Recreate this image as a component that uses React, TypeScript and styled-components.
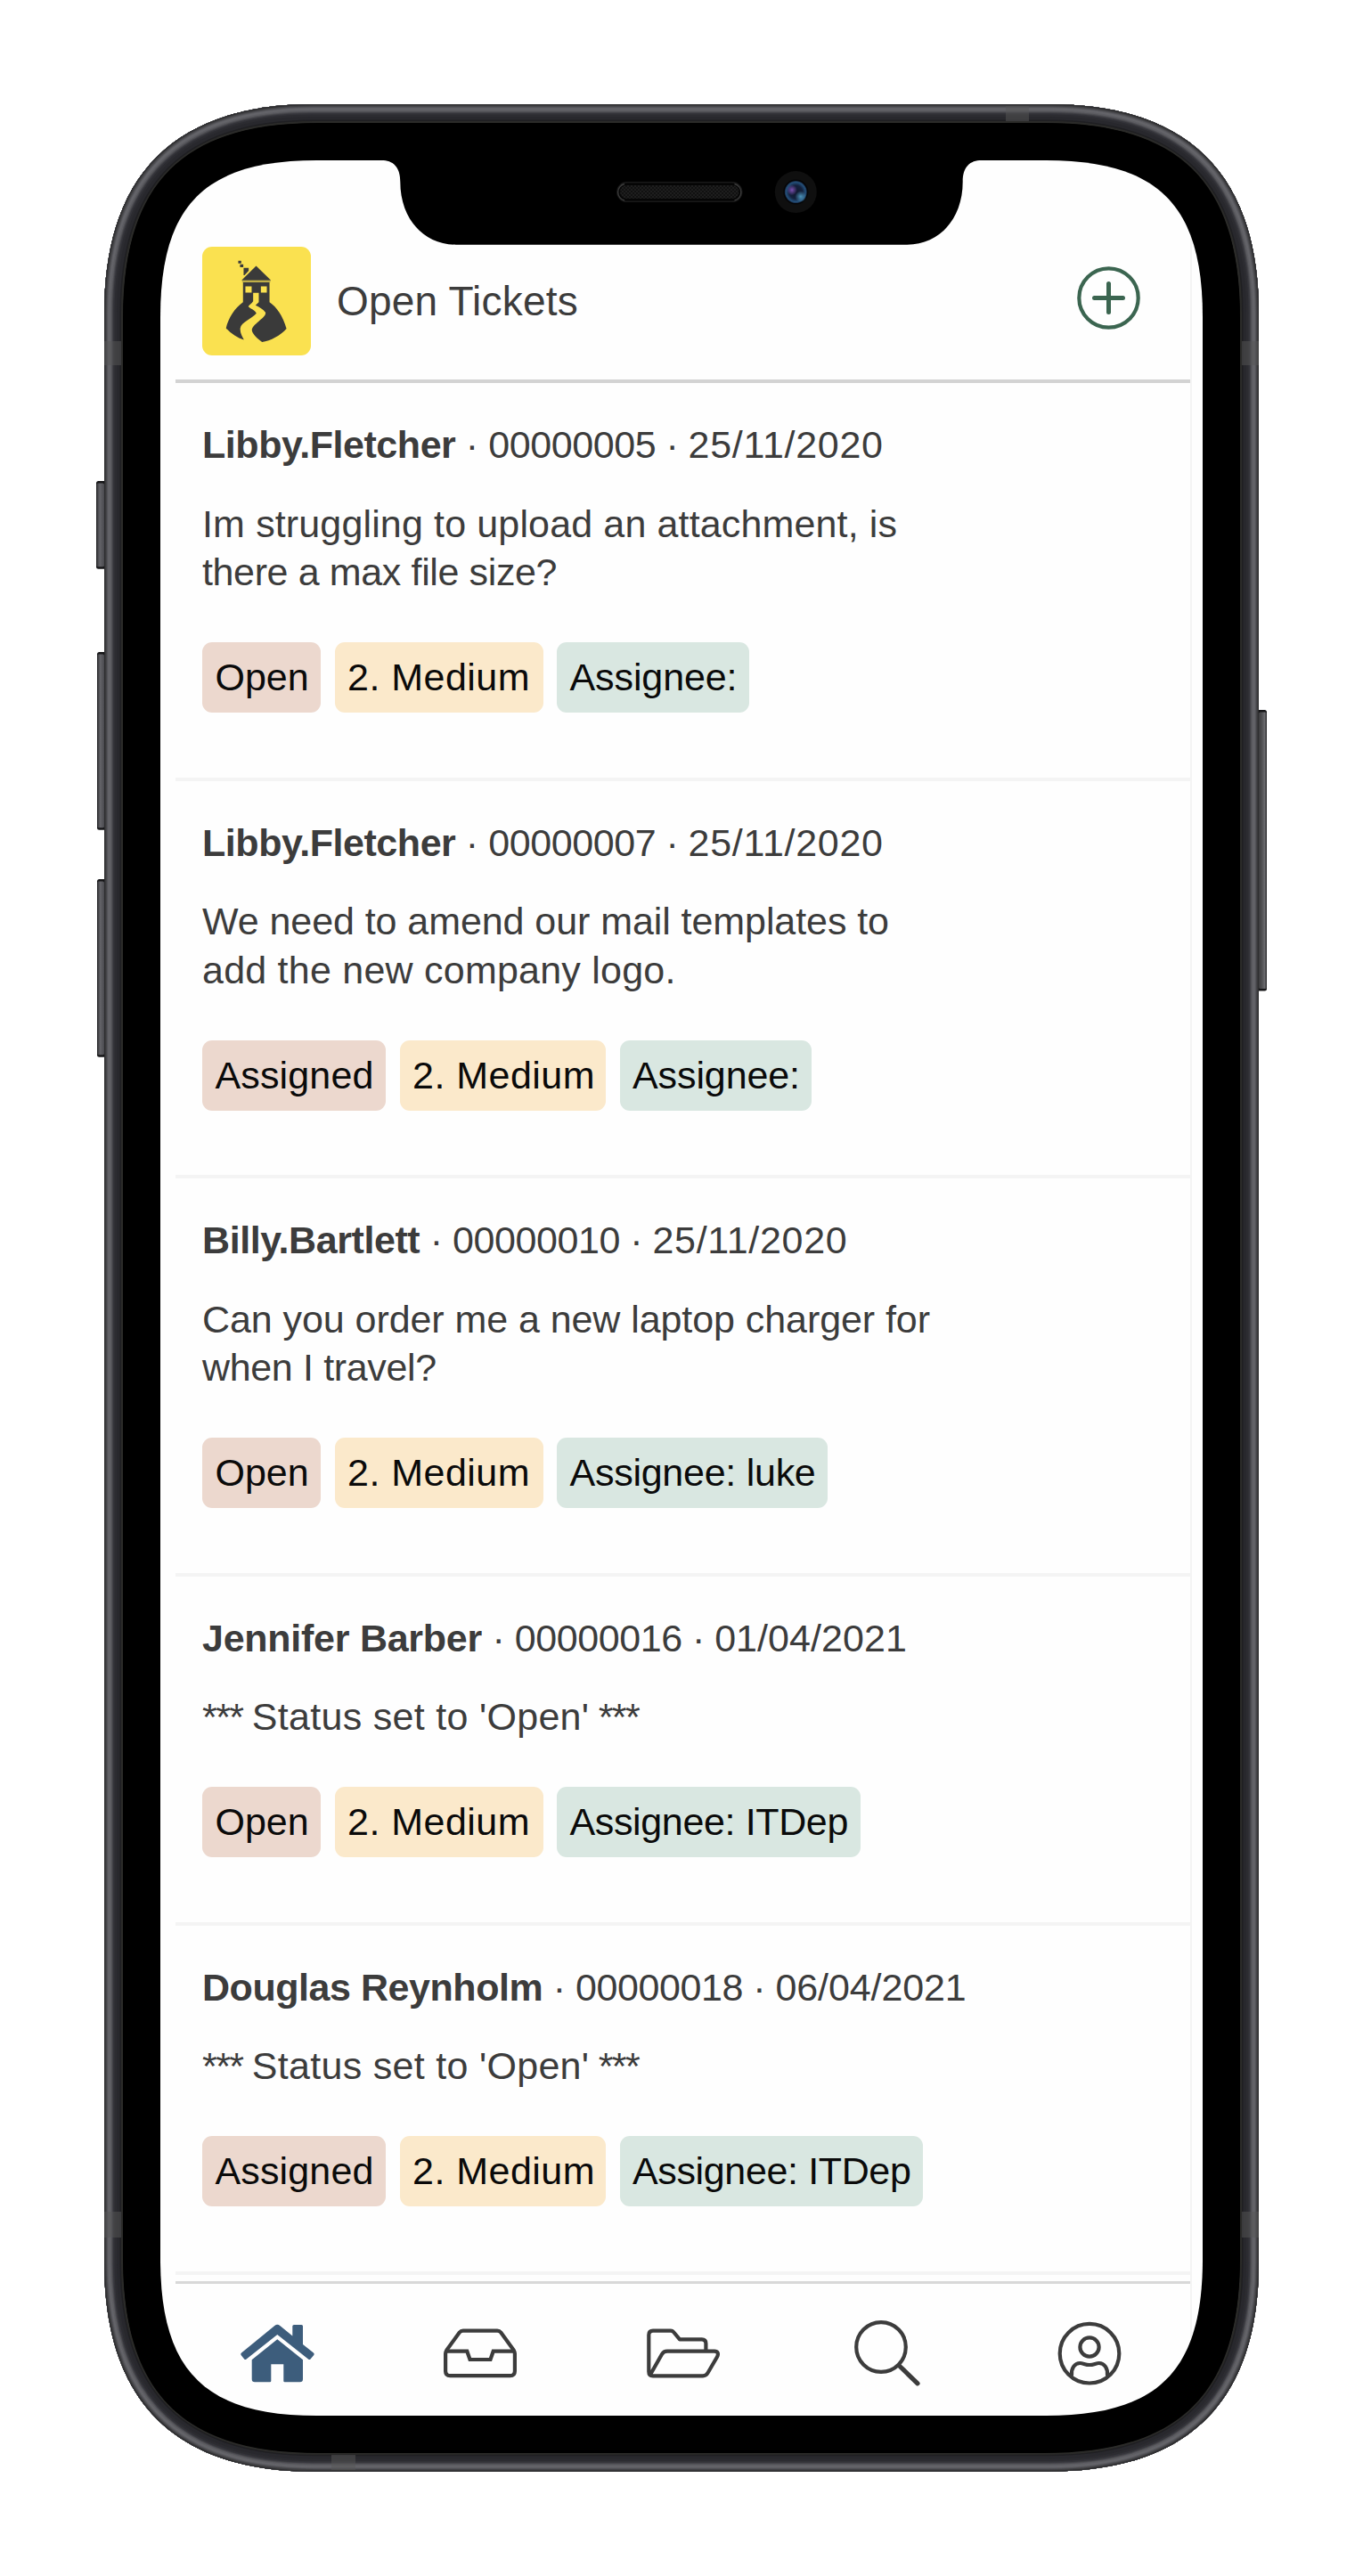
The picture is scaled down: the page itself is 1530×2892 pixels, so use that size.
import React from "react";
import styled, { createGlobalStyle } from "styled-components";

const GlobalStyle = createGlobalStyle`
  *, *::before, *::after { box-sizing: border-box; }
  body {
    margin: 0;
    background: #ffffff;
    font-family: "Liberation Sans", Arial, Helvetica, sans-serif;
  }
`;

/* ---------- device ---------- */

const Stage = styled.main`
  position: relative;
  width: 1530px;
  height: 2892px;
  padding: 180px;
  overflow: hidden;
  background: #ffffff;
`;

const DeviceArt = styled.svg`
  position: absolute;
  inset: 0;
  display: block;
  pointer-events: none;
`;

type Corner = { l: number; t: number; r: number; b: number; reach: number; pull: number };

const roundedPath = ({ l, t, r, b, reach: n, pull: k }: Corner) =>
  `M${l + n} ${t}H${r - n}C${r - k} ${t} ${r} ${t + k} ${r} ${t + n}V${b - n}` +
  `C${r} ${b - k} ${r - k} ${b} ${r - n} ${b}H${l + n}` +
  `C${l + k} ${b} ${l} ${b - k} ${l} ${b - n}V${t + n}C${l} ${t + k} ${l + k} ${t} ${l + n} ${t}Z`;

const BODY = roundedPath({ l: 117, t: 117, r: 1413, b: 2774.7, reach: 235, pull: 79 });
const GLASS = roundedPath({ l: 138, t: 138, r: 1392, b: 2754, reach: 220, pull: 67 });
const DISPLAY = roundedPath({ l: 180, t: 180, r: 1350, b: 2712, reach: 176, pull: 50 });

const NOTCH =
  "M426 178V180H428.3C441 180 449.3 187 449.3 204C449.3 246 476 274.7 511.7 274.7" +
  "H1018.3C1054 274.7 1080.7 246 1080.7 204C1080.7 187 1089 180 1101.7 180H1104V178Z";

/* depth from the outer edge of the metal band, and its shade there */
const METAL: [number, string][] = [
  [21.5, "#2b2b29"],
  [19, "#1f1f22"],
  [17.5, "#28282d"],
  [14, "#2c2c31"],
  [11.5, "#34343a"],
  [10, "#414146"],
  [9, "#4f4f54"],
  [8, "#5d5d62"],
  [6.5, "#646469"],
  [4.5, "#5b5b60"],
  [3.5, "#4d4d51"],
  [2.5, "#3f3f42"],
  [1.2, "#2d2d2f"],
];

const BANDS = [
  [117, 383, 19, 27],
  [1394, 383, 19, 27],
  [117, 2483, 19, 29],
  [1394, 2483, 19, 29],
  [1129, 119, 26, 17],
  [372, 2756, 27, 17],
];

const BUTTONS = [
  { x: 108, y: 540, w: 9, h: 98.7, left: true },
  { x: 109, y: 732, w: 8, h: 199.7, left: true },
  { x: 109, y: 987, w: 8, h: 199.8, left: true },
  { x: 1413, y: 797, w: 9, h: 315.5, left: false },
];

const Device = () => (
  <DeviceArt width="1530" height="2892" viewBox="0 0 1530 2892" aria-hidden="true">
    <defs>
      <clipPath id="body">
        <path d={BODY} />
      </clipPath>
      <mask id="opening">
        <rect width="1530" height="2892" fill="#fff" />
        <path d={DISPLAY} fill="#000" />
      </mask>
      <linearGradient id="keyLeft">
        <stop offset="0" stopColor="#1c1c1e" />
        <stop offset="0.2" stopColor="#46464a" />
        <stop offset="0.45" stopColor="#636368" />
        <stop offset="1" stopColor="#4a4a4f" />
      </linearGradient>
      <linearGradient id="keyRight">
        <stop offset="0" stopColor="#3c3c3e" />
        <stop offset="0.4" stopColor="#505053" />
        <stop offset="0.75" stopColor="#6c6c70" />
        <stop offset="1" stopColor="#1c1c1e" />
      </linearGradient>
      <pattern id="mesh" width="4" height="4" patternUnits="userSpaceOnUse">
        <rect width="4" height="4" fill="#111" />
        <rect width="2" height="2" fill="#1e1e1e" />
        <rect x="2" y="2" width="2" height="2" fill="#1e1e1e" />
      </pattern>
      <radialGradient id="lens" cx="0.5" cy="0.5" r="0.5">
        <stop offset="0" stopColor="#10172d" />
        <stop offset="0.6" stopColor="#14213d" />
        <stop offset="0.88" stopColor="#24507a" />
        <stop offset="1" stopColor="#15263f" />
      </radialGradient>
      <radialGradient id="violet">
        <stop offset="0" stopColor="#7a4fae" />
        <stop offset="1" stopColor="#7a4fae" stopOpacity="0" />
      </radialGradient>
      <radialGradient id="cyan">
        <stop offset="0" stopColor="#4c93b8" />
        <stop offset="1" stopColor="#4c93b8" stopOpacity="0" />
      </radialGradient>
    </defs>

    {BUTTONS.map((b) => (
      <g key={b.y}>
        <rect x={b.left ? b.x : b.x - 4} y={b.y} width={b.w + 4} height={b.h} rx="2.5" fill="#161618" />
        <rect
          x={b.x}
          y={b.y + 2.5}
          width={b.w}
          height={b.h - 5}
          rx="1.5"
          fill={b.left ? "url(#keyLeft)" : "url(#keyRight)"}
        />
      </g>
    ))}

    <g mask="url(#opening)">
      <path d={BODY} fill="#000" />
      <g clipPath="url(#body)">
        {METAL.map(([depth, shade]) => (
          <path key={depth} d={BODY} fill="none" stroke={shade} strokeWidth={depth * 2} />
        ))}
        {BANDS.map(([x, y, w, h]) => (
          <rect key={`${x}-${y}`} x={x} y={y} width={w} height={h} fill="#555555" fillOpacity="0.5" />
        ))}
      </g>
      <path d={GLASS} fill="#000" />
    </g>

    <path d={NOTCH} fill="#000" />
    <rect x="692.8" y="204.8" width="140" height="21.5" rx="10.7" fill="#050505" stroke="#191919" strokeWidth="1.4" />
    <path
      d="M701 206.500A9.500 9.500 0 0 0 701 225M824.500 206.500A9.500 9.500 0 0 1 824.500 225"
      fill="none"
      stroke="#3a3a3a"
      strokeWidth="1.4"
    />
    <rect x="696" y="208" width="133.500" height="15" rx="7.500" fill="url(#mesh)" />
    <circle cx="893.3" cy="215.600" r="23.500" fill="#0f0f0f" />
    <circle cx="893.3" cy="215.600" r="14" fill="#050507" />
    <circle cx="893.3" cy="215.600" r="12.500" fill="url(#lens)" />
    <circle cx="889" cy="213.300" r="6" fill="url(#violet)" />
    <circle cx="898.800" cy="220.700" r="6.500" fill="url(#cyan)" />
  </DeviceArt>
);

/* ---------- app shell ---------- */

const Screen = styled.div`
  display: flex;
  width: 1170px;
  height: 2532px;
  padding-left: 17px;
  background: #fefefe;
`;

const AppColumn = styled.div`
  display: flex;
  flex-direction: column;
  width: 1141px;
  border-right: 2px solid #f4f4f4;
  background: #fefefe;
`;

const Header = styled.header`
  display: flex;
  align-items: flex-start;
  height: 250px;
  padding: 97px 56px 0 30px;
  border-bottom: 4px solid #d3d3d3;
`;

const LogoTile = styled.svg`
  flex: none;
  width: 122px;
  height: 122px;
  border-radius: 11px;
  background: #fae150;
`;

const Title = styled.h1<{ $tracking: number }>`
  flex: 1;
  margin: 34px 0 0 29px;
  font-size: 46px;
  font-weight: 400;
  line-height: 54px;
  letter-spacing: ${(p) => p.$tracking}px;
  color: #3c3c3c;
`;

const AddButton = styled.button`
  flex: none;
  width: 71px;
  height: 71px;
  margin-top: 22px;
  padding: 0;
  border: 0;
  background: none;

  svg {
    display: block;
  }
`;

/* ---------- tickets ---------- */

const TicketList = styled.section`
  flex: none;
  height: 2131px;
`;

const Ticket = styled.article`
  padding: 42px 0 72.5px 30px;
  border-bottom: 4px solid #f4f4f4;
  font-size: 43px;
  line-height: 54.5px;
  color: #3c3c3c;
`;

const Meta = styled.div`
  height: 54px;
  line-height: 54px;
  white-space: pre;
`;

const Run = styled.span<{ $tracking?: number }>`
  letter-spacing: ${(p) => p.$tracking ?? 0}px;
`;

const Author = styled.strong<{ $tracking: number }>`
  font-weight: 700;
  letter-spacing: ${(p) => p.$tracking}px;
`;

const Message = styled.div`
  display: flex;
  flex-direction: column;
  margin: 34.5px 0 51.5px;
`;

const MessageLine = styled.span`
  height: 54.5px;
  white-space: pre;
`;

const Tags = styled.div`
  display: flex;
  gap: 15.5px;
`;

const tones = { status: "#ecd8ce", priority: "#fbe9cb", assignee: "#d9e7e1" };

const Tag = styled.span<{ $tone: keyof typeof tones; $width: number; $tracking: number }>`
  width: ${(p) => p.$width}px;
  height: 79px;
  padding-left: 14.5px;
  border-radius: 11px;
  background: ${(p) => tones[p.$tone]};
  line-height: 79px;
  letter-spacing: ${(p) => p.$tracking}px;
  white-space: pre;
  color: #0a0a0a;
`;

/* ---------- tab bar ---------- */

const TabBar = styled.nav`
  display: grid;
  grid-template-columns: repeat(5, 228px);
  align-items: start;
  justify-content: center;
  flex: 1;
  padding-top: 33px;
  border-top: 3px solid #d8d8d8;
`;

const Tab = styled.button<{ $active?: boolean }>`
  display: flex;
  align-items: center;
  justify-content: center;
  height: 90px;
  padding: 0;
  border: 0;
  background: none;
  color: ${(p) => (p.$active ? "#3d5d7c" : "#3c3c3c")};
`;

const TabIcon = styled.svg`
  display: block;
  width: 100px;
  height: 90px;
  fill: none;
  stroke: currentColor;
  stroke-width: 4.2;
  stroke-linejoin: round;
  stroke-linecap: round;
`;

/* ---------- data ---------- */

type Text = [string, number];
type TicketData = {
  author: Text;
  number: string;
  date: Text;
  lines: Text[][];
  status: "Open" | "Assigned";
  assignee: "Assignee:" | "Assignee: luke" | "Assignee: ITDep";
};

const tagMetrics: Record<string, { width: number; tracking: number }> = {
  Open: { width: 133, tracking: 0 },
  Assigned: { width: 206, tracking: 0.14 },
  "2. Medium": { width: 234, tracking: 0.48 },
  "Assignee:": { width: 215.5, tracking: -0.1 },
  "Assignee: luke": { width: 304, tracking: -0.26 },
  "Assignee: ITDep": { width: 340.5, tracking: -0.36 },
};

const statusLine: Text[] = [
  ["*** ", -1.6],
  ["Status set to 'Open'", 0.3],
  [" ***", -1.6],
];

const tickets: TicketData[] = [
  {
    author: ["Libby.Fletcher", -0.45],
    number: "00000005",
    date: ["25/11/2020", 0.7],
    lines: [[["Im struggling to upload an attachment, is", 0.14]], [["there a max file size?", -0.37]]],
    status: "Open",
    assignee: "Assignee:",
  },
  {
    author: ["Libby.Fletcher", -0.45],
    number: "00000007",
    date: ["25/11/2020", 0.7],
    lines: [[["We need to amend our mail templates to", -0.07]], [["add the new company logo.", 0.23]]],
    status: "Assigned",
    assignee: "Assignee:",
  },
  {
    author: ["Billy.Bartlett", -0.42],
    number: "00000010",
    date: ["25/11/2020", 0.7],
    lines: [[["Can you order me a new laptop charger for", -0.07]], [["when I travel?", -0.35]]],
    status: "Open",
    assignee: "Assignee: luke",
  },
  {
    author: ["Jennifer Barber", -0.26],
    number: "00000016",
    date: ["01/04/2021", 0.05],
    lines: [statusLine],
    status: "Open",
    assignee: "Assignee: ITDep",
  },
  {
    author: ["Douglas Reynholm", -0.45],
    number: "00000018",
    date: ["06/04/2021", -0.1],
    lines: [statusLine],
    status: "Assigned",
    assignee: "Assignee: ITDep",
  },
];

const Label = ({ tone, text, width }: { tone: keyof typeof tones; text: string; width?: number }) => (
  <Tag $tone={tone} $width={width ?? tagMetrics[text].width} $tracking={tagMetrics[text].tracking}>
    {text}
  </Tag>
);

const TicketCard = ({ ticket }: { ticket: TicketData }) => (
  <Ticket>
    <Meta>
      <Author $tracking={ticket.author[1]}>{ticket.author[0]}</Author>
      <Run $tracking={-0.5}>{" · "}</Run>
      <Run $tracking={-0.41}>{ticket.number}</Run>
      <Run $tracking={-0.6}>{" · "}</Run>
      <Run $tracking={ticket.date[1]}>{ticket.date[0]}</Run>
    </Meta>
    <Message>
      {ticket.lines.map((runs) => (
        <MessageLine key={runs[0][0]}>
          {runs.map(([text, tracking]) => (
            <Run key={text} $tracking={tracking}>
              {text}
            </Run>
          ))}
        </MessageLine>
      ))}
    </Message>
    <Tags>
      <Label tone="status" text={ticket.status} />
      <Label tone="priority" text="2. Medium" width={ticket.status === "Assigned" ? 231.5 : 234} />
      <Label tone="assignee" text={ticket.assignee} />
    </Tags>
  </Ticket>
);

const Logo = () => (
  <LogoTile viewBox="411 532 365 365" role="img" aria-label="Home on the hill">
    <g fill="#3a3a3a">
      <path d="M532 579h10v9h-10zM538 591h11v10h-11zM550 603h17v10l-14 15h-3z" />
      <path d="M592 596L642 645H543Z" />
      <path d="M545 647.500h95v2.500h-95z" fillOpacity="0.6" />
      <path d="M548 652H637V718C660 733 683 765 694 807C675 829 640 848 612 852C597 841 580 826 578 813C576 803 590 792 600 783C612 772 627 762 623 752C617 744 602 734 590 729L601 718V687H582V715C578 722 567 728 566 733C572 740 590 745 593 756C580 773 541 787 539 805C537 820 545 833 551 845C529 838 508 825 491 806C497 775 519 738 548 718Z" />
    </g>
    <path d="M556 665h21v21h-21zM608 665h20v21h-20z" fill="#fae150" />
  </LogoTile>
);

const AddIcon = () => (
  <svg width="71" height="71" viewBox="0 0 71 71" fill="none" stroke="#3b6550">
    <circle cx="35.5" cy="35.5" r="33.2" strokeWidth="4.2" />
    <path d="M35.5 19.500V51.500M19.500 35.500H51.500" strokeWidth="5" strokeLinecap="round" />
  </svg>
);

const HomeIcon = () => (
  <TabIcon viewBox="260 2596 100 90">
    <g fill="currentColor" stroke="none">
      <path d="M307.3 2609.900Q310.300 2607.700 313.300 2609.900L327.300 2621.500V2610.500Q327.300 2609 329 2609H337.500Q339 2609 339 2610.500V2631L351 2640.500Q352.300 2641.800 351.300 2643L347.500 2647.500Q346.300 2648.500 345 2647.500L310.300 2620L275.600 2647.500Q274.300 2648.500 273.200 2647.500L269.600 2643Q268.600 2641.800 270 2640.500Z" />
      <path d="M310.300 2625.300L339 2648.300V2670Q339 2673.300 335.700 2673.300H318.500Q317.300 2673.300 317.300 2672V2653.300H303.300V2672Q303.300 2673.300 302 2673.300H285Q281.700 2673.300 281.700 2670V2648.300Z" />
    </g>
  </TabIcon>
);

const InboxIcon = () => (
  <TabIcon viewBox="488.200 2596 100 90">
    <path d="M499.300 2641.500Q499.300 2639.500 500.500 2637.500L515 2617.500Q516.500 2615.600 519 2615.600H557.400Q559.900 2615.600 561.400 2617.500L575.900 2637.500Q577.100 2639.500 577.100 2641.500V2661Q577.100 2666.200 571.900 2666.200H504.500Q499.300 2666.200 499.300 2661Z" />
    <path d="M500.500 2638.700H523.500L526.700 2648H549.700L552.900 2638.700H575.900" strokeLinejoin="miter" />
  </TabIcon>
);

const FolderIcon = () => (
  <TabIcon viewBox="716 2596 100 90">
    <path d="M791.400 2638.300V2630Q791.400 2625.400 786.800 2625.400H762L755 2617Q753.800 2615.600 752 2615.600H732Q727.300 2615.600 727.300 2620.300V2661.500Q727.300 2666.300 732 2666.300H788Q791.500 2666.300 793.500 2663L804 2645Q805.500 2642.300 804.500 2640.200Q803.700 2638.700 801 2638.700H748Q744 2638.700 742 2642L729.500 2664" />
  </TabIcon>
);

const SearchIcon = () => (
  <TabIcon viewBox="943 2596 100 90">
    <circle cx="987" cy="2634" r="27.8" />
    <path d="M1008.500 2656L1028 2674.800" strokeWidth="5.200" />
  </TabIcon>
);

const ProfileIcon = () => (
  <TabIcon viewBox="1171.200 2596 100 90">
    <circle cx="1221.200" cy="2641.200" r="33.300" />
    <circle cx="1221.200" cy="2634" r="10.600" />
    <path d="M1201.200 2665.500C1200.500 2658 1204.500 2652 1210.500 2652C1214 2652 1216.500 2654 1221.200 2654C1225.900 2654 1228.400 2652 1231.900 2652C1237.900 2652 1241.900 2658 1241.200 2665.500" />
  </TabIcon>
);

export default function App() {
  return (
    <>
      <GlobalStyle />
      <Stage>
        <Screen>
          <AppColumn>
            <Header>
              <Logo />
              <Title $tracking={0.2}>Open Tickets</Title>
              <AddButton aria-label="New ticket">
                <AddIcon />
              </AddButton>
            </Header>
            <TicketList>
              {tickets.map((ticket) => (
                <TicketCard key={ticket.number} ticket={ticket} />
              ))}
            </TicketList>
            <TabBar>
              <Tab $active aria-label="Home">
                <HomeIcon />
              </Tab>
              <Tab aria-label="Inbox">
                <InboxIcon />
              </Tab>
              <Tab aria-label="Folders">
                <FolderIcon />
              </Tab>
              <Tab aria-label="Search">
                <SearchIcon />
              </Tab>
              <Tab aria-label="Profile">
                <ProfileIcon />
              </Tab>
            </TabBar>
          </AppColumn>
        </Screen>
        <Device />
      </Stage>
    </>
  );
}
